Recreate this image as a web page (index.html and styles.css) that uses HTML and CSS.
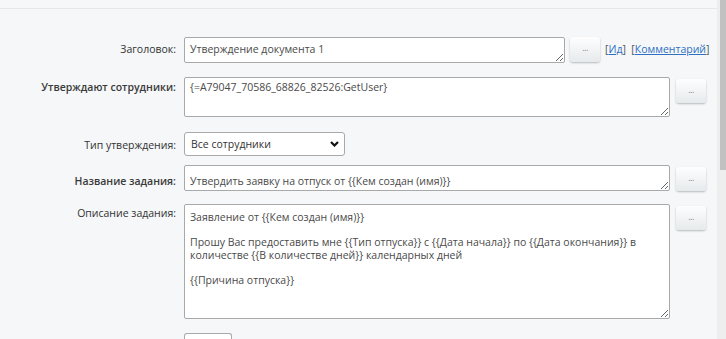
FILE: index.html
```html
<!DOCTYPE html>
<html lang="ru">
<head>
  <meta charset="UTF-8">
  <title>Утверждение документа</title>
  <link rel="stylesheet" href="styles.css">
</head>
<body>
  <div class="page">
    <div class="content">
      <div class="topbar"></div>

      <div class="form">
        <div class="row row-title">
          <label class="label">Заголовок:</label>
          <textarea class="field field-title" spellcheck="false">Утверждение документа 1</textarea>
          <button class="dots">...</button>
          <span class="links">[<a href="#">Ид</a>]&nbsp; [<a href="#">Комментарий</a>]</span>
        </div>

        <div class="row row-users">
          <label class="label bold">Утверждают сотрудники:</label>
          <textarea class="field field-users" spellcheck="false">{=A79047_70586_68826_82526:GetUser}</textarea>
          <button class="dots">...</button>
        </div>

        <div class="row row-type">
          <label class="label">Тип утверждения:</label>
          <div class="select">
            <span>Все сотрудники</span>
            <svg class="chevron" width="9" height="6" viewBox="0 0 9 6">
              <path d="M1 1 L4.5 4.5 L8 1" fill="none" stroke="#111" stroke-width="2.2"/>
            </svg>
          </div>
        </div>

        <div class="row row-name">
          <label class="label bold">Название задания:</label>
          <textarea class="field field-name" spellcheck="false">Утвердить заявку на отпуск от {{Кем создан (имя)}}</textarea>
          <button class="dots">...</button>
        </div>

        <div class="row row-desc">
          <label class="label">Описание задания:</label>
          <textarea class="field field-desc" spellcheck="false">Заявление от {{Кем создан (имя)}}

Прошу Вас предоставить мне {{Тип отпуска}} с {{Дата начала}} по {{Дата окончания}} в количестве {{В количестве дней}} календарных дней

{{Причина отпуска}}</textarea>
          <button class="dots">...</button>
        </div>

        <div class="row row-more">
          <span class="label"></span>
          <div class="small-box"></div>
        </div>
      </div>
    </div>

    <div class="scrollbar">
      <div class="thumb"></div>
    </div>
  </div>
</body>
</html>
```

FILE: styles.css
```css
html, body {
  margin: 0;
  height: 100%;
  overflow: hidden;
}

body {
  font-family: 'Open Sans', 'Noto Sans', sans-serif;
  font-size: 10.5px;
  line-height: 12.5px;
  color: #333;
  background-color: #f5f7f8;
}

.page {
  display: flex;
  height: 339px;
  overflow: hidden;
}

.content {
  flex: 1;
  overflow: hidden;
}

.topbar {
  height: 8px;
  border-bottom: 1px solid #e4e8ea;
}

.form {
  padding-top: 27px;
}

.row {
  display: flex;
  align-items: flex-start;
}

.label {
  width: 176px;
  flex: none;
  text-align: right;
  margin-right: 8px;
  color: #333;
}

.label.bold {
  font-weight: 600;
  color: #3a3a3a;
}

.field {
  box-sizing: border-box;
  font-family: inherit;
  font-size: 10.5px;
  line-height: 12.5px;
  color: #4a4a4a;
  background: #fff;
  border: 1px solid #a7a9ab;
  border-radius: 2px;
  padding: 5px 5px;
  margin: 0;
  outline: none;
  overflow: hidden;
}

.dots {
  box-sizing: border-box;
  width: 30px;
  height: 25px;
  margin-left: 5px;
  padding: 0 0 4px;
  border: none;
  border-radius: 3px;
  background: linear-gradient(#fefefe, #e6eaec);
  box-shadow: 0 1px 2px rgba(0, 0, 0, 0.25);
  color: #888;
  font-size: 9px;
  font-family: inherit;
  letter-spacing: -0.5px;
}

.links {
  margin-left: 5px;
  margin-top: 6px;
  color: #555;
  white-space: nowrap;
}

.links a {
  color: #2f6fc4;
  text-decoration: underline;
}

/* rows */

.row-title {
  margin-top: 1px;
}

.row-title .label {
  padding-top: 6px;
}

.field-title {
  width: 381px;
  height: 26px;
  padding-top: 5px;
}

.row-users {
  margin-top: 14px;
}

.row-users .label {
  padding-top: 4px;
}

.field-users {
  width: 486px;
  height: 40px;
  padding-top: 3px;
}

.row-users .dots,
.row-name .dots,
.row-desc .dots {
  margin-left: 6px;
  height: 24px;
  margin-top: 2px;
}

.row-type {
  margin-top: 15px;
}

.row-type .label {
  padding-top: 7px;
}

.select {
  box-sizing: border-box;
  width: 161px;
  height: 24px;
  display: flex;
  align-items: center;
  justify-content: space-between;
  padding: 0 5px 0 6px;
  background: #fff;
  border: 1px solid #a7a9ab;
  border-radius: 3px;
  color: #333;
}

.row-name {
  margin-top: 9px;
}

.row-name .label {
  padding-top: 10px;
}

.field-name {
  width: 486px;
  height: 26px;
  padding-top: 9px;
}

.row-desc {
  margin-top: 13px;
}

.row-desc .label {
  padding-top: 3px;
}

.field-desc {
  width: 486px;
  height: 115px;
  padding-top: 6px;
  white-space: pre-wrap;
}

.row-more {
  margin-top: 14px;
}

.small-box {
  box-sizing: border-box;
  width: 48px;
  height: 6px;
  background: #fff;
  border: 1px solid #a7a9ab;
  border-bottom: none;
  border-radius: 3px 3px 0 0;
}

/* scrollbar */

.scrollbar {
  width: 9px;
  flex: none;
  background: #eeeeee;
}

.thumb {
  margin-left: 3px;
  height: 170px;
  background: #c1c1c1;
}
```
